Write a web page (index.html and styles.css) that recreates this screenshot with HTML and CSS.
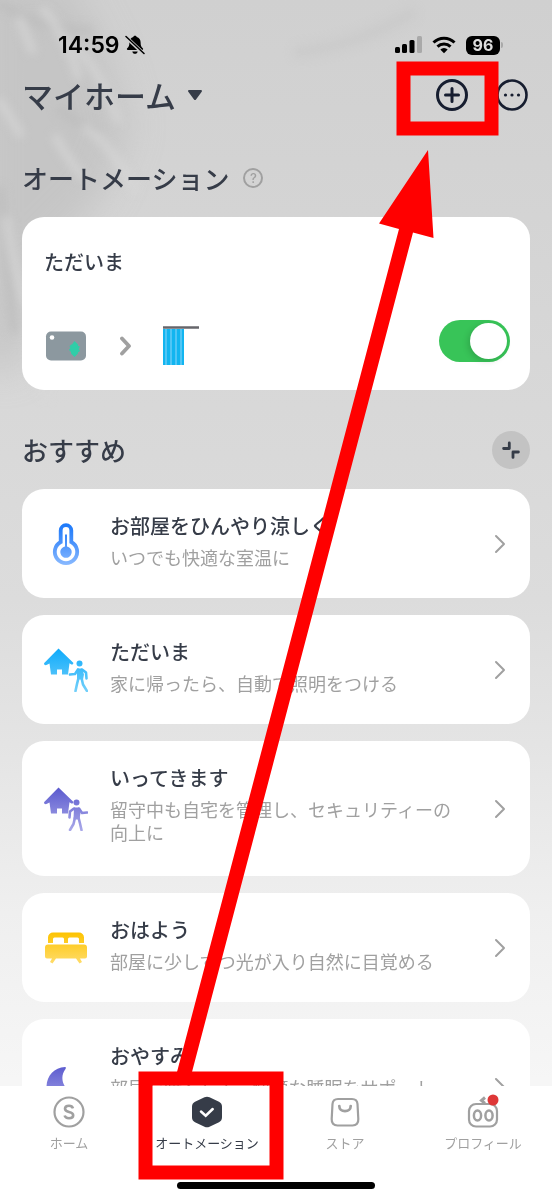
FILE: index.html
```html
<!DOCTYPE html>
<html lang="ja">
<head>
<meta charset="utf-8">
<meta name="viewport" content="width=device-width, initial-scale=1">
<title>オートメーション</title>
<link rel="stylesheet" href="styles.css">
</head>
<body>
<div class="screen">
  <svg class="leaf-shadow" viewBox="0 0 552 440" preserveAspectRatio="xMinYMin slice" aria-hidden="true">
    <defs>
      <filter id="broad" x="-50%" y="-50%" width="200%" height="200%"><feGaussianBlur stdDeviation="18"/></filter>
      <filter id="soft" x="-20%" y="-20%" width="140%" height="140%"><feGaussianBlur stdDeviation="4"/></filter>
    </defs>
    <path d="M-20-20H70L110 60 130 130 100 200 40 260 20 370H-20z" fill="#c1c1c1" opacity=".75" filter="url(#broad)"/>
    <g filter="url(#soft)" fill="none" stroke-linecap="round">
      <path d="M300 52Q360 44 410 14" stroke="#c8c8c8" stroke-width="14" opacity=".5"/>
      <path d="M0 4Q40 30 90 30M60 110Q80 126 96 130M0 190Q6 260 14 330" stroke="#bbb" stroke-width="9" opacity=".6"/>
      <path d="M20 20Q26 36 32 50M0 102Q10 116 20 134M44 10Q68 40 78 76M80 50Q104 80 118 120M56 138Q66 156 82 176M86 128Q110 144 136 190M6 220Q12 260 24 300M30 350Q34 380 46 396" stroke="#d8d8d8" stroke-width="8" opacity=".65"/>
    </g>
  </svg>

  <div class="status-bar">
    <div class="status-left">
      <span class="clock">14:59</span>
      <svg width="20" height="20" viewBox="0 0 20 20" aria-hidden="true">
        <path d="M10 .8c.9 0 1.500.5 1.700 1.300 2.500.7 3.900 2.700 3.900 5.200 0 3.400.6 4.500 2.200 6 .6.600.400 1.700-.7 1.700H2.900c-1.100 0-1.300-1.100-.7-1.700 1.600-1.500 2.200-2.600 2.200-6 0-2.500 1.400-4.500 3.900-5.200C8.500 1.300 9.100.8 10 .8zM7.300 16.500h5.400c-.3 1.400-1.300 2.300-2.700 2.300s-2.400-.9-2.700-2.300z"/>
        <path d="M1 2l18 17" stroke="#cfcfcf" stroke-width="3.600"/>
        <path d="M1 1.500l18 17" stroke="#000" stroke-width="1.500" stroke-linecap="round"/>
      </svg>
    </div>
    <div class="status-right">
      <svg width="27" height="18" viewBox="0 0 27 18" aria-hidden="true">
        <rect x="0" y="11" width="5" height="6" rx="1.500"/><rect x="7" y="8" width="5" height="9" rx="1.500"/><rect x="14.500" y="4" width="5" height="13" rx="1.500"/><rect x="22" y="0" width="5" height="17" rx="1.500" fill="#a9a9a9"/>
      </svg>
      <svg width="24" height="18" viewBox="0 0 24 18" aria-hidden="true">
        <g fill="none" stroke="#000" stroke-width="3"><path d="M1.500 6.500a15 15 0 0 1 21 0"/><path d="M5.500 10.600a9.300 9.300 0 0 1 13 0"/></g>
        <path d="M8.300 13.400a5.300 5.300 0 0 1 7.400 0L12 17.200z"/>
      </svg>
      <div class="battery-group"><span class="battery">96</span><span class="battery-cap"></span></div>
    </div>
  </div>

  <header class="app-header">
    <button class="home-picker" type="button">マイホーム
      <svg width="16" height="12" viewBox="0 0 16 12" aria-hidden="true"><path d="M2 1h12c.9 0 1.300 1 .7 1.700L9 10.400c-.5.700-1.500.7-2 0L1.300 2.700C.7 2 1.100 1 2 1z" fill="#363c48"/></svg>
    </button>
    <div class="header-actions">
      <button class="round-button" type="button" aria-label="追加">
        <svg width="32" height="32" viewBox="0 0 32 32" fill="none" stroke="#161d2f" stroke-width="3" stroke-linecap="round"><circle cx="16" cy="16" r="14.500"/><path d="M16 9.500v13M9.500 16h13"/></svg>
      </button>
      <button class="round-button" type="button" aria-label="その他">
        <svg width="32" height="32" viewBox="0 0 32 32"><circle cx="16" cy="16" r="14.500" fill="none" stroke="#161d2f" stroke-width="2.600"/><g fill="#161d2f"><circle cx="9.500" cy="16" r="1.600"/><circle cx="16" cy="16" r="1.600"/><circle cx="22.500" cy="16" r="1.600"/></g></svg>
      </button>
    </div>
  </header>

  <main class="content">
    <div class="section-head">
      <h1 class="section-title">オートメーション</h1>
      <button class="help" type="button" aria-label="ヘルプ">?</button>
    </div>

    <section class="scene">
      <h2 class="item-title" id="scene-name">ただいま</h2>
      <div class="scene-row">
        <div class="scene-flow">
          <svg width="42" height="39" viewBox="0 0 42 39" aria-hidden="true">
            <rect x="2" y="5.500" width="40" height="29" rx="5" fill="#8c989f"/><circle cx="8" cy="11.500" r="2.300" fill="#fff"/>
            <path d="M30.500 15l3.500 3.500v1.500h1.500v2l-1 1 1.500 1.500-1 1.500h-1v1.500L30.500 31l-3.500-3.500v-2h-1l-1-2 1.500-1.500-1-1.500 1.500-2h1z" fill="#30cda8"/>
          </svg>
          <svg width="13" height="39" viewBox="0 0 13 39" fill="none" stroke="#a0a0a0" stroke-width="3.800" stroke-linecap="round" stroke-linejoin="round" aria-hidden="true"><path d="M4 12.500l7 7.500-7 7.500"/></svg>
          <svg width="37" height="39" viewBox="0 0 37 39" aria-hidden="true">
            <path d="M0 3h21v36H0z" fill="#12b5f0"/><path d="M3 3v36M8 3v36M13 3v36M18 3v36" stroke="#72cff7" stroke-width="1.300"/>
            <path d="M0 1.500h36" stroke="#66666b" stroke-width="2.500"/>
          </svg>
        </div>
        <input class="switch" type="checkbox" role="switch" aria-labelledby="scene-name" checked>
      </div>
    </section>

    <div class="section-head section-head-spread">
      <h2 class="section-title">おすすめ</h2>
      <button class="collapse" type="button" aria-label="折りたたむ">
        <svg width="18" height="18" viewBox="0 0 18 18" fill="none" stroke="#363c48" stroke-width="2.800" stroke-linecap="round" stroke-linejoin="round"><path d="M1.600 7.500H7.300V2M16.400 11H11v5.400"/></svg>
      </button>
    </div>

    <nav class="suggestions" aria-label="おすすめ">
      <a class="suggestion" href="#cool">
        <svg class="suggestion-icon" viewBox="0 0 44 44" aria-hidden="true">
          <defs><linearGradient id="blue" gradientUnits="userSpaceOnUse" x1="0" y1="0" x2="0" y2="44"><stop offset="0" stop-color="#1877fa"/><stop offset=".45" stop-color="#4690fb"/><stop offset="1" stop-color="#8cbbff"/></linearGradient></defs>
          <path d="M16.700 8.500a5.300 5.300 0 0 1 10.600 0v11.500a11.200 11.200 0 1 1-10.600 0z" fill="none" stroke="url(#blue)" stroke-width="3.800"/>
          <path d="M21 12.500h2v12a5.700 5.700 0 1 1-2 0z" fill="url(#blue)"/>
        </svg>
        <span class="suggestion-text"><span class="item-title">お部屋をひんやり涼しく</span><span class="item-desc">いつでも快適な室温に</span></span>
        <svg class="chevron" viewBox="0 0 12 20" aria-hidden="true"><path d="M2 2l8 8-8 8"/></svg>
      </a>
      <a class="suggestion" href="#arrive">
        <svg class="suggestion-icon" viewBox="0 0 44 44" aria-hidden="true">
          <defs><linearGradient id="sky" gradientUnits="userSpaceOnUse" x1="0" y1="0" x2="0" y2="44"><stop offset="0" stop-color="#0daafb"/><stop offset="1" stop-color="#74d0fa"/></linearGradient></defs>
          <path d="M14.500.5L29 14.500c1 1-.5 2.500-1.700 2l-1.800-1.200-1.500 11.200h-6v-5h-5v5H7L5.500 15.500 3 16.800C1 18-.9 16.200.5 14.700z" fill="url(#sky)"/>
          <circle cx="35.500" cy="15.500" r="3" fill="url(#sky)"/>
          <path d="M33 20.500h5l2 6-1 5h-6z" fill="url(#sky)"/>
          <path d="M34 21.500l-3 4.500-5 .5M38 21.500l4 3 .5 6M34.500 30l-1.500 6-1.500 7M37.500 30l1.500 6.500 4 6.500" fill="none" stroke="url(#sky)" stroke-width="2.600" stroke-linecap="round" stroke-linejoin="round"/>
        </svg>
        <span class="suggestion-text"><span class="item-title">ただいま</span><span class="item-desc">家に帰ったら、自動で照明をつける</span></span>
        <svg class="chevron" viewBox="0 0 12 20" aria-hidden="true"><path d="M2 2l8 8-8 8"/></svg>
      </a>
      <a class="suggestion suggestion-tall" href="#leave">
        <svg class="suggestion-icon" viewBox="0 0 44 44" aria-hidden="true">
          <defs><linearGradient id="violet" gradientUnits="userSpaceOnUse" x1="0" y1="0" x2="0" y2="44"><stop offset="0" stop-color="#5a59ce"/><stop offset="1" stop-color="#aaa9e9"/></linearGradient></defs>
          <path d="M14.500.5L29 14.500c1 1-.5 2.500-1.700 2l-1.800-1.200-1.500 11.200h-6v-5h-5v5H7L5.500 15.500 3 16.800C1 18-.9 16.200.5 14.700z" fill="url(#violet)"/>
          <circle cx="32.500" cy="15.500" r="3" fill="url(#violet)"/>
          <path d="M30 20.500h5l1.500 5-1 7h-6z" fill="url(#violet)"/>
          <path d="M30 21.500l-4 3-.5 6M35 21.500l3 4.500 5-.5M31 30.500l-1.500 6.500-3.500 6M34.500 30.500l1.500 6 1.500 6.500" fill="none" stroke="url(#violet)" stroke-width="2.600" stroke-linecap="round" stroke-linejoin="round"/>
        </svg>
        <span class="suggestion-text"><span class="item-title">いってきます</span><span class="item-desc">留守中も自宅を管理し、セキュリティーの向上に</span></span>
        <svg class="chevron" viewBox="0 0 12 20" aria-hidden="true"><path d="M2 2l8 8-8 8"/></svg>
      </a>
      <a class="suggestion" href="#morning">
        <svg class="suggestion-icon" viewBox="0 0 44 44" aria-hidden="true">
          <defs><linearGradient id="gold" gradientUnits="userSpaceOnUse" x1="0" y1="6" x2="0" y2="38"><stop offset="0" stop-color="#fdc300"/><stop offset="1" stop-color="#ffdc6b"/></linearGradient></defs>
          <path d="M4 17V11.500a5 5 0 0 1 5-5h26a5 5 0 0 1 5 5V17h-5v-4a1.500 1.500 0 0 0-1.500-1.500h-8A1.500 1.500 0 0 0 24 13v4h-4v-4a1.500 1.500 0 0 0-1.500-1.500h-8A1.500 1.500 0 0 0 9 13v4z" fill="url(#gold)"/>
          <path d="M4 18.500h36a3 3 0 0 1 3 3v9a2 2 0 0 1-2 2h-5l2 3.500-2.500 1.500-3.500-5H12l-3.500 5L6 36l2-3.500H3a2 2 0 0 1-2-2v-9a3 3 0 0 1 3-3z" fill="url(#gold)"/>
        </svg>
        <span class="suggestion-text"><span class="item-title">おはよう</span><span class="item-desc">部屋に少しずつ光が入り自然に目覚める</span></span>
        <svg class="chevron" viewBox="0 0 12 20" aria-hidden="true"><path d="M2 2l8 8-8 8"/></svg>
      </a>
      <a class="suggestion suggestion-tall" href="#night">
        <svg class="suggestion-icon" viewBox="0 0 44 44" aria-hidden="true">
          <path d="M21 2C10 2.500 2.500 11 2.500 22a19 19 0 0 0 36 8C26 32 12 17 21.500 4c.7-1 .5-2-.5-2z" fill="url(#violet)"/>
        </svg>
        <span class="suggestion-text"><span class="item-title">おやすみ</span><span class="item-desc">部屋を暗くして、快適な睡眠をサポート</span></span>
        <svg class="chevron" viewBox="0 0 12 20" aria-hidden="true"><path d="M2 2l8 8-8 8"/></svg>
      </a>
    </nav>
  </main>

  <footer class="tab-bar">
    <nav class="tabs" aria-label="メイン">
      <a class="tab" href="#home">
        <svg width="32" height="32" viewBox="0 0 32 32" fill="none" stroke="#a0a0a0" aria-hidden="true"><circle cx="16" cy="16" r="14.500" stroke-width="2.200"/><path d="M20 12.300c-.5-1.500-2-2.500-4-2.500-2.300 0-4 1.200-4 3 0 1.900 1.600 2.600 4 3.100s4.200 1.300 4.200 3.300c0 1.800-1.800 3-4.200 3-2.200 0-3.900-1-4.400-2.700" stroke-width="2.600"/></svg>
        ホーム
      </a>
      <a class="tab tab-current" href="#automation" aria-current="page">
        <svg width="32" height="32" viewBox="0 0 32 32" aria-hidden="true"><path d="M13.500 1.200a6 6 0 0 1 5 0l9.500 4.600a5.500 5.500 0 0 1 3 5v10.400a5.500 5.500 0 0 1-3 5l-9.500 4.600a6 6 0 0 1-5 0L4 26.200a5.500 5.500 0 0 1-3-5V10.800a5.500 5.500 0 0 1 3-5z" fill="#363c48"/><path d="M10 15.500l4.700 4.200 7-6.700" fill="none" stroke="#fff" stroke-width="2.500" stroke-linecap="round"/></svg>
        オートメーション
      </a>
      <a class="tab" href="#store">
        <svg width="32" height="32" viewBox="0 0 32 32" fill="none" stroke="#a0a0a0" stroke-width="2.200" aria-hidden="true"><path d="M9 3h14c3.500 0 5.300 2 5.500 5l.8 15c.2 4-1.800 6.500-5.800 6.500h-15c-4 0-6-2.500-5.800-6.500L3.500 8C3.700 5 5.500 3 9 3z"/><path d="M10.300 10c0 3 2.300 5.200 5.700 5.200s5.700-2.200 5.700-5.200" stroke-width="2.700" stroke-linecap="round"/></svg>
        ストア
      </a>
      <a class="tab" href="#profile">
        <svg class="profile-icon" width="32" height="32" viewBox="0 0 32 32" fill="none" stroke="#a0a0a0" stroke-width="2.200" aria-hidden="true"><rect x="2" y="8" width="28" height="22.500" rx="7"/><ellipse cx="10.500" cy="19.500" rx="3.600" ry="5" stroke-width="2.500"/><ellipse cx="22" cy="19.500" rx="3.600" ry="5" stroke-width="2.500"/><path d="M18 1.500l-3.500 3 3.500 2.800" stroke-width="3"/><circle cx="26" cy="4" r="5.500" fill="#de3737" stroke="none"/></svg>
        プロフィール
      </a>
    </nav>
    <div class="home-indicator"></div>
  </footer>

  <svg class="annotation" viewBox="0 0 552 1200" preserveAspectRatio="none" aria-hidden="true">
    <g fill="none" stroke="#f00" stroke-width="14"><rect x="403.500" y="68.500" width="88" height="60"/><rect x="145.500" y="1078.500" width="131" height="94"/></g>
    <path d="M428 150l5.500 88-20.500-5.500L192 1072h-15L399 229l-20-5.500z" fill="#f00"/>
  </svg>
</div>
</body>
</html>
```

FILE: styles.css
```css
* { box-sizing: border-box; }

body {
  margin: 0;
  font-family: "Noto Sans CJK JP", "Noto Sans", sans-serif;
  color: #363c48;
}

button {
  padding: 0;
  border: 0;
  background: none;
  color: inherit;
  font: inherit;
}

a { color: inherit; text-decoration: none; }
h1, h2 { margin: 0; }
svg { display: block; flex: none; }

.screen {
  position: relative;
  isolation: isolate;
  display: flex;
  flex-direction: column;
  height: 100vh;
  overflow: hidden;
  background: linear-gradient(#d0d0d0 0%, #d4d4d4 18%, #d9d9d9 38%, #dcdcdc 50%, #e4e4e4 62%, #efefef 76%, #f6f6f6 90%);
}

.leaf-shadow {
  position: absolute;
  z-index: -1;
  top: 0;
  left: 0;
  width: 100%;
  height: 440px;
}

.status-bar {
  display: flex;
  flex: none;
  align-items: center;
  justify-content: space-between;
  height: 79px;
  padding: 11px 49px 0 58px;
  color: #000;
}

.status-left, .status-right { display: flex; align-items: center; }
.status-left { gap: 5px; }
.status-right { gap: 10px; }

.clock {
  font: 600 23px/28px Inter, sans-serif;
}

.battery-group {
  display: flex;
  align-items: center;
  gap: 1px;
}

.battery {
  width: 34px;
  border-radius: 6px;
  background: #000;
  color: #dedede;
  font: 700 16px/19px Inter, sans-serif;
  text-align: center;
}

.battery-cap {
  width: 2px;
  height: 6px;
  border-radius: 0 2px 2px 0;
  background: #a9a9a9;
}

.app-header {
  display: flex;
  flex: none;
  align-items: center;
  justify-content: space-between;
  height: 32px;
  padding: 0 24px 0 22px;
}

.home-picker {
  display: flex;
  align-items: center;
  gap: 11px;
  font-size: 31px;
  font-weight: 500;
  line-height: 30px;
}

.header-actions { display: flex; gap: 28px; }

.content {
  flex: 1;
  min-height: 0;
  overflow: hidden;
  padding: 48px 22px 0;
}

.section-head {
  display: flex;
  align-items: center;
  gap: 14px;
  height: 38px;
  margin-bottom: 20px;
}

.section-head-spread {
  justify-content: space-between;
  margin-top: 41px;
}

.section-title {
  font-size: 26px;
  font-weight: 500;
  line-height: 38px;
}

.help {
  width: 20px;
  height: 20px;
  border: 2px solid #a0a0a0;
  border-radius: 50%;
  color: #a0a0a0;
  font: 500 13px/16px Inter, sans-serif;
}

.scene, .suggestion {
  border-radius: 22px;
  background: #fff;
}

.scene { padding: 31px 20px 25px 22px; }

.scene-row {
  display: flex;
  align-items: flex-start;
  justify-content: space-between;
  height: 45px;
  margin-top: 44px;
}

.scene-flow { display: flex; gap: 32px; padding-top: 6px; }

.switch {
  width: 71px;
  height: 42px;
  margin: 0;
  padding: 3px;
  border-radius: 21px;
  background: #38c458;
  appearance: none;
}

.switch::before {
  content: "";
  display: block;
  width: 37px;
  height: 36px;
  margin-left: auto;
  border-radius: 50%;
  background: #fff;
  box-shadow: -2px 2px 6px #00000026;
}

.switch:not(:checked) { background: #d0d0d0; }
.switch:not(:checked)::before { margin-left: 0; }

.collapse {
  display: grid;
  place-items: center;
  width: 38px;
  height: 38px;
  border-radius: 50%;
  background: #c3c3c3;
}

.suggestions {
  display: flex;
  flex-direction: column;
  gap: 17px;
}

.suggestion {
  display: flex;
  flex: none;
  align-items: center;
  gap: 22px;
  min-height: 109px;
  padding: 0 24px 0 22px;
}

.suggestion-tall { min-height: 135px; }

.suggestion-icon { width: 44px; height: 44px; }

.suggestion-text {
  flex: 1;
  align-self: flex-start;
  padding: 23px 18px 29px 0;
}

.item-title {
  display: block;
  font-size: 20px;
  font-weight: 500;
  line-height: 28px;
}

.item-desc {
  display: block;
  margin-top: 6px;
  color: #a0a0a0;
  font-size: 18px;
  line-height: 23px;
}

.chevron {
  width: 12px;
  height: 20px;
  fill: none;
  stroke: #a0a0a0;
  stroke-width: 2;
  stroke-linecap: round;
  stroke-linejoin: round;
}

.tab-bar {
  flex: none;
  padding: 10px 0 11px;
  background: #fff;
}

.tabs {
  display: grid;
  grid-template-columns: repeat(4, 1fr);
}

.tab {
  display: flex;
  flex-direction: column;
  align-items: center;
  gap: 5px;
  color: #a0a0a0;
  font-size: 13px;
  line-height: 20px;
}

.tab-current { color: #363c48; }
.profile-icon { overflow: visible; }

.home-indicator {
  width: 36%;
  height: 7px;
  margin: 29px auto 0;
  border-radius: 4px;
  background: #000;
}

.annotation {
  position: absolute;
  inset: 0;
  width: 100%;
  height: 100%;
  pointer-events: none;
}
```
